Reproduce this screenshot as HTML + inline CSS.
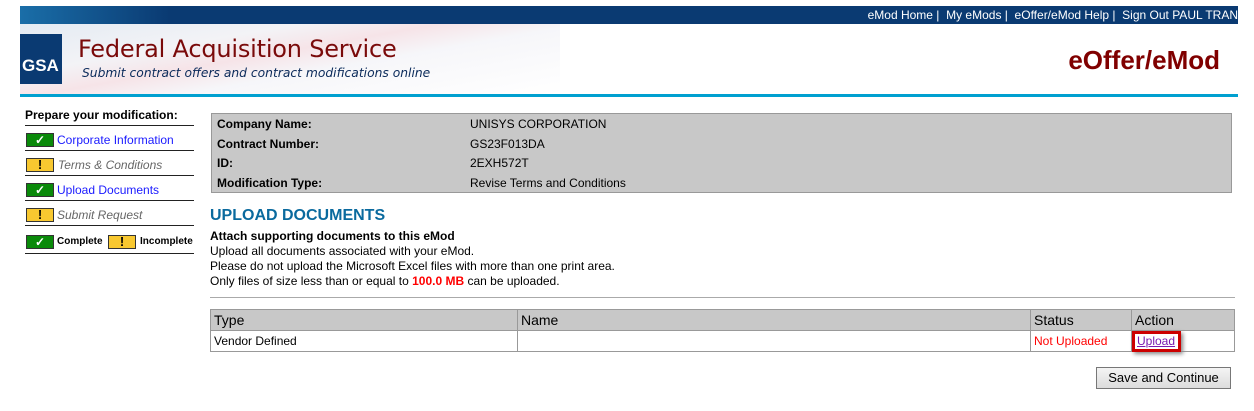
<!DOCTYPE html>
<html><head><style>
*{margin:0;padding:0;box-sizing:border-box}
body{width:1254px;height:411px;background:#fff;font-family:"Liberation Sans",Arial,sans-serif;position:relative;overflow:hidden;font-size:12px;color:#000}
.a{position:absolute;white-space:nowrap}
.ok{position:absolute;width:28px;height:14px;background:#0a8a0a;border:1px solid #333;color:#fff;font-size:12px;line-height:12px;text-align:center;font-weight:bold}
.wn{position:absolute;width:28px;height:14px;background:#f8c830;border:1px solid #333;color:#000;font-size:13px;line-height:12px;text-align:center;font-weight:bold}
.ln{position:absolute;left:25px;width:169px;height:1px;background:#222}
td{border:1px solid #999;font-size:13px;padding:0 3px;height:21px}
</style></head><body>
<div class="a" style="left:20px;top:6px;width:1218px;height:18px;background:linear-gradient(90deg,#1a6ea8 0,#0a3a72 150px,#0a3a72 100%)"></div>
<div class="a" style="left:20px;top:24px;width:540px;height:70px;background:linear-gradient(170deg,#dde6f0 0%,#f0f0f4 30%,#f4dde2 45%,#f4f4f8 60%,#fff 100%);opacity:.8"></div>
<div class="a" style="right:16px;top:8px;color:#fff;font-size:12px">eMod Home |&nbsp; My eMods |&nbsp; eOffer/eMod Help |&nbsp; Sign Out PAUL TRAN</div>
<div class="a" style="left:20px;top:34px;width:42px;height:50px;background:#0a3a72;color:#fff;font-size:17px;font-weight:bold;padding-top:22px;padding-left:2px">GSA</div>
<div class="a" style="left:78px;top:35px;color:#7a0a0a;font-size:24px;font-family:'DejaVu Sans',sans-serif;letter-spacing:-0.2px">Federal Acquisition Service</div>
<div class="a" style="left:82px;top:66px;color:#0a2a5a;font-size:12.3px;font-style:italic;font-family:'DejaVu Sans',sans-serif">Submit contract offers and contract modifications online</div>
<div class="a" style="right:34px;top:45px;color:#800000;font-size:26px;font-weight:bold">eOffer/eMod</div>
<div class="a" style="left:20px;top:94px;width:1218px;height:3px;background:#00a0d0"></div>

<div class="a" style="left:25px;top:108px;font-weight:bold;font-size:12px">Prepare your modification:</div>
<div class="ln" style="top:125px"></div>
<div class="ok" style="left:26px;top:133px">✓</div><div class="a" style="left:57px;top:133px;color:#1a1aff;font-size:12px">Corporate Information</div>
<div class="ln" style="top:150px"></div>
<div class="wn" style="left:26px;top:158px">!</div><div class="a" style="left:58px;top:158px;color:#666;font-style:italic">Terms &amp; Conditions</div>
<div class="ln" style="top:175px"></div>
<div class="ok" style="left:26px;top:183px">✓</div><div class="a" style="left:57px;top:183px;color:#1a1aff">Upload Documents</div>
<div class="ln" style="top:200px"></div>
<div class="wn" style="left:26px;top:208px">!</div><div class="a" style="left:57px;top:208px;color:#666;font-style:italic">Submit Request</div>
<div class="ln" style="top:225px"></div>
<div class="ok" style="left:26px;top:235px">✓</div><div class="a" style="left:57px;top:236px;font-size:10px;font-weight:bold">Complete</div>
<div class="wn" style="left:108px;top:235px">!</div><div class="a" style="left:140px;top:236px;font-size:10px;font-weight:bold">Incomplete</div>
<div class="ln" style="top:253px"></div>

<div class="a" style="left:211px;top:113px;width:1021px;height:80px;background:#c8c8c8;border:1px solid #999"></div>
<div class="a" style="left:217px;top:115px;font-weight:bold;line-height:19.7px">Company Name:<br>Contract Number:<br>ID:<br>Modification Type:</div>
<div class="a" style="left:470px;top:115px;line-height:19.7px">UNISYS CORPORATION<br>GS23F013DA<br>2EXH572T<br>Revise Terms and Conditions</div>

<div class="a" style="left:210px;top:207px;color:#0a6a9e;font-size:16px;font-weight:bold">UPLOAD DOCUMENTS</div>
<div class="a" style="left:210px;top:229px;line-height:15px"><b>Attach supporting documents to this eMod</b><br>Upload all documents associated with your eMod.<br>Please do not upload the Microsoft Excel files with more than one print area.<br>Only files of size less than or equal to <b style="color:#f00">100.0 MB</b> can be uploaded.</div>
<div class="a" style="left:210px;top:297px;width:1025px;height:1px;background:#aaa"></div>

<table class="a" style="left:210px;top:309px;width:1025px;border-collapse:collapse">
<tr style="background:#c8c8c8"><td style="width:307px;font-size:14px">Type</td><td style="width:513px;font-size:14px">Name</td><td style="width:101px;font-size:14px">Status</td><td style="font-size:14px">Action</td></tr>
<tr><td style="font-size:12px">Vendor Defined</td><td></td><td style="color:#f00;font-size:12px">Not Uploaded</td><td style="font-size:12px;position:relative"><span style="position:absolute;left:0;top:0;width:49px;height:21px;border:3px solid #c00;box-shadow:2px 2px 4px #888"></span><span style="color:#7a1ab0;text-decoration:underline;padding-left:2px">Upload</span></td></tr>
</table>

<div class="a" style="left:1096px;top:367px;width:135px;height:22px;background:linear-gradient(#f4f4f4,#dcdcdc);border:1px solid #777;font-size:13px;text-align:center;line-height:20px">Save and Continue</div>
</body></html>
